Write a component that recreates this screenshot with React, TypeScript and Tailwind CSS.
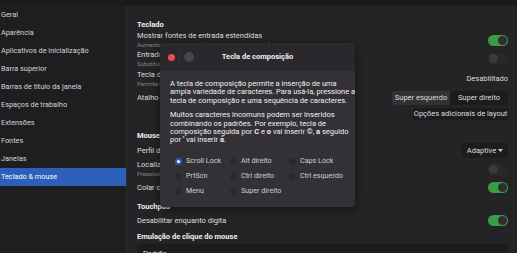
import React from "react";

const SIDEBAR = [
  "Geral",
  "Aparência",
  "Aplicativos de inicialização",
  "Barra superior",
  "Barras de título da janela",
  "Espaços de trabalho",
  "Extensões",
  "Fontes",
  "Janelas",
  "Teclado & mouse",
];

function Toggle({ on }: { on?: boolean }) {
  return on ? (
    <div className="w-[20px] h-[11px] rounded-full bg-[#3b9c46] flex items-center justify-end pr-[1px] shrink-0">
      <div className="w-[9px] h-[9px] rounded-full bg-[#2e2e31]" />
    </div>
  ) : (
    <div className="w-[20px] h-[11px] rounded-full bg-[#29292c] flex items-center pl-[1px] shrink-0">
      <div className="w-[9px] h-[9px] rounded-full bg-[#3a3a3e]" />
    </div>
  );
}

// clip: the label runs under the dialog, so cut it where the dialog starts
function Row({
  h,
  title,
  sub,
  clip,
  children,
}: {
  h: string;
  title: string;
  sub?: string;
  clip?: boolean;
  children?: React.ReactNode;
}) {
  return (
    <div className={`${h} shrink-0 flex items-center justify-between`}>
      <div className={`flex flex-col ${clip ? "max-w-[23px] overflow-hidden" : ""}`}>
        <span className="leading-[9px] text-[#dedede] whitespace-nowrap">{title}</span>
        {sub && <span className="leading-[9px] text-[6px] text-[#85858a] whitespace-nowrap">{sub}</span>}
      </div>
      {children}
    </div>
  );
}

function Heading({ h, children }: { h: string; children: React.ReactNode }) {
  return <div className={`${h} shrink-0 flex items-center font-bold text-[#efefef]`}>{children}</div>;
}

function Radio({ label, checked }: { label: string; checked?: boolean }) {
  return (
    <div className="h-[15px] flex items-center gap-[4px]">
      {checked ? (
        <div className="w-[7px] h-[7px] rounded-full bg-[#2a5cb5] flex items-center justify-center">
          <div className="w-[3px] h-[3px] rounded-full bg-white" />
        </div>
      ) : (
        <div className="w-[7px] h-[7px] rounded-full bg-[#2b292e]" />
      )}
      <span className="text-[#cfcfd1] text-[7.2px] whitespace-nowrap">{label}</span>
    </div>
  );
}

export default function App() {
  return (
    <div className="relative w-[517px] h-[253px] overflow-hidden bg-[#242426] font-[Roboto,sans-serif] text-[7.5px] flex flex-col">
      <div className="h-[6px] bg-[#1b1b1d] shrink-0" />
      <div className="flex flex-1 min-h-0">
        <div className="w-[127px] bg-[#1e1e20] border-r border-[#2c2c2f] shrink-0 flex flex-col text-[7.3px]">
          {SIDEBAR.map((s, i) => (
            <div
              key={s}
              className={`h-[18px] shrink-0 flex items-center pl-[1px] whitespace-nowrap ${
                i === 9 ? "bg-[#2b5fb9] text-white" : "text-[#d4d4d6]"
              }`}
            >
              {s}
            </div>
          ))}
        </div>

        <div className="flex-1 flex flex-col pl-[10px] pr-[9px] pt-[13px] overflow-hidden">
          <Heading h="h-[12px]">Teclado</Heading>
          <Row h="h-[18px]" title="Mostrar fontes de entrada estendidas" sub="Aumenta o tamanho da fonte da entrada nas configurações">
            <Toggle on />
          </Row>
          <Row h="h-[19px]" clip title="Entrada de fontes por janela" sub="Substitui a fonte de entrada por janela">
            <Toggle />
          </Row>
          <Row h="h-[21px]" clip title="Tecla de composição" sub="Permite inserir caracteres adicionais">
            <span className="text-[#dedede]">Desabilitado</span>
          </Row>
          <Row h="h-[17px]" clip title="Atalho de visão geral">
            <div className="flex h-[14px] rounded-[3px] bg-[#1c1c1e] overflow-hidden text-[#dedede]">
              <div className="w-[58px] flex items-center justify-center bg-[#323235]">Super esquerdo</div>
              <div className="w-[58px] flex items-center justify-center">Super direito</div>
            </div>
          </Row>
          <div className="h-[16px] shrink-0 flex items-center justify-end">
            <div className="h-[12px] w-[95px] rounded-[3px] bg-[#1c1c1e] flex items-center justify-center text-[#dedede]">
              Opções adicionais de layout
            </div>
          </div>
          <div className="h-[8px] shrink-0" />
          <Heading h="h-[12px]">Mouse</Heading>
          <Row h="h-[17px]" clip title="Perfil de aceleração">
            <div className="h-[15px] w-[46px] rounded-[3px] bg-[#1c1c1e] flex items-center justify-center gap-[2px] text-[#dedede]">
              Adaptive
              <svg width="5" height="3" viewBox="0 0 5 3">
                <path d="M0 0h5L2.5 3z" fill="#cfcfcf" />
              </svg>
            </div>
          </Row>
          <Row h="h-[20px]" clip title="Localizar ponteiro" sub="Pressione Ctrl para destacar o ponteiro">
            <Toggle />
          </Row>
          <Row h="h-[17px]" clip title="Colar com o botão do meio">
            <Toggle on />
          </Row>
          <div className="h-[5px] shrink-0" />
          <Heading h="h-[12px]">Touchpad</Heading>
          <Row h="h-[15px]" title="Desabilitar enquanto digita">
            <Toggle on />
          </Row>
          <div className="h-[3px] shrink-0" />
          <Heading h="h-[12px]">Emulação de clique do mouse</Heading>
          <div className="h-[20px] shrink-0 mt-[1px] bg-[#1c1c1e] rounded-t-[3px] px-[6px] pt-[4px] text-[#dedede]">Padrão</div>
        </div>
      </div>

      <div className="absolute left-[160px] top-[43px] w-[195px] h-[164px] rounded-[4px] overflow-hidden bg-[#333136] shadow-[0_2px_10px_rgba(0,0,0,0.5)] flex flex-col">
        <div className="h-[28px] bg-[#2a282d] flex items-center relative shrink-0">
          <div className="ml-[8px] w-[7px] h-[7px] rounded-full bg-[#ef4b55]" />
          <div className="ml-[4px] w-px h-[16px] bg-[#37353a]" />
          <div className="ml-[4px] w-[10px] h-[10px] rounded-full bg-[#48464c]" />
          <div className="absolute inset-0 flex items-center justify-center font-bold text-[#f2f2f2]">
            Tecla de composição
          </div>
        </div>
        <div className="pl-[10px] pt-[9px] text-[#f0f0f0] text-[7.5px] leading-[8.3px] whitespace-nowrap">
          <p>
            A tecla de composição permite a inserção de uma
            <br />
            ampla variedade de caracteres. Para usá-la, pressione a
            <br />
            tecla de composição e uma sequência de caracteres.
          </p>
          <p className="mt-[6.5px]">
            Muitos caracteres incomuns podem ser inseridos
            <br />
            combinando os padrões. Por exemplo, tecla de
            <br />
            composição seguida por <b>C</b> e <b>o</b> vai inserir <b>©</b>, <b>a</b> seguido
            <br />
            por <b>'</b> vai inserir <b>á</b>.
          </p>
        </div>
        <div className="grid grid-cols-[55px_59px_auto] pl-[15px] mt-[9px]">
          <Radio label="Scroll Lock" checked />
          <Radio label="Alt direito" />
          <Radio label="Caps Lock" />
          <Radio label="PrtScn" />
          <Radio label="Ctrl direito" />
          <Radio label="Ctrl esquerdo" />
          <Radio label="Menu" />
          <Radio label="Super direito" />
        </div>
      </div>
    </div>
  );
}
